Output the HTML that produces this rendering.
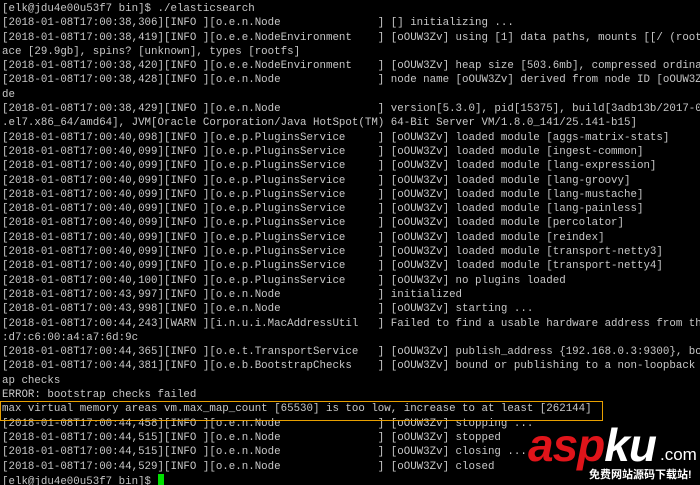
<!DOCTYPE html>
<html><head><meta charset="utf-8"><style>
html,body{margin:0;padding:0;background:#000;width:700px;height:485px;overflow:hidden;position:relative}
pre{margin:0;position:absolute;left:2px;top:2px;width:698px;height:483px;overflow:hidden;font-family:"Liberation Mono",monospace;font-size:10.8px;line-height:14.3px;color:#c8c8c8;white-space:pre}
.box{position:absolute;left:0;top:401px;width:603px;height:20px;border:1.5px solid #e8a000;box-sizing:border-box}
.cur{display:inline-block;width:6px;height:12px;background:#00e000;vertical-align:-2px}
.wm{position:absolute;left:528px;top:420px;font-family:"Liberation Sans",sans-serif;font-weight:bold;font-style:italic;font-size:46px;letter-spacing:-1px;line-height:50px}
.wm .a{color:#e0141a}.wm .k{color:#fff}
.com{position:absolute;left:660px;top:445px;font-family:"Liberation Sans",sans-serif;color:#fff;font-size:17px}
.cn{position:absolute;left:589px;top:466px;white-space:nowrap;font-family:"Liberation Sans","Noto Sans CJK SC",sans-serif;color:#fff;font-size:11px;font-weight:bold}
</style></head><body>
<pre>[elk@jdu4e00u53f7 bin]$ ./elasticsearch
[2018-01-08T17:00:38,306][INFO ][o.e.n.Node               ] [] initializing ...
[2018-01-08T17:00:38,419][INFO ][o.e.e.NodeEnvironment    ] [oOUW3Zv] using [1] data paths, mounts [[/ (rootfs)]], net usable_sp
ace [29.9gb], spins? [unknown], types [rootfs]
[2018-01-08T17:00:38,420][INFO ][o.e.e.NodeEnvironment    ] [oOUW3Zv] heap size [503.6mb], compressed ordinary object pointers
[2018-01-08T17:00:38,428][INFO ][o.e.n.Node               ] node name [oOUW3Zv] derived from node ID [oOUW3ZvSQ]; set [node.name]
de
[2018-01-08T17:00:38,429][INFO ][o.e.n.Node               ] version[5.3.0], pid[15375], build[3adb13b/2017-03-23T03:31:50.652Z]
.el7.x86_64/amd64], JVM[Oracle Corporation/Java HotSpot(TM) 64-Bit Server VM/1.8.0_141/25.141-b15]
[2018-01-08T17:00:40,098][INFO ][o.e.p.PluginsService     ] [oOUW3Zv] loaded module [aggs-matrix-stats]
[2018-01-08T17:00:40,099][INFO ][o.e.p.PluginsService     ] [oOUW3Zv] loaded module [ingest-common]
[2018-01-08T17:00:40,099][INFO ][o.e.p.PluginsService     ] [oOUW3Zv] loaded module [lang-expression]
[2018-01-08T17:00:40,099][INFO ][o.e.p.PluginsService     ] [oOUW3Zv] loaded module [lang-groovy]
[2018-01-08T17:00:40,099][INFO ][o.e.p.PluginsService     ] [oOUW3Zv] loaded module [lang-mustache]
[2018-01-08T17:00:40,099][INFO ][o.e.p.PluginsService     ] [oOUW3Zv] loaded module [lang-painless]
[2018-01-08T17:00:40,099][INFO ][o.e.p.PluginsService     ] [oOUW3Zv] loaded module [percolator]
[2018-01-08T17:00:40,099][INFO ][o.e.p.PluginsService     ] [oOUW3Zv] loaded module [reindex]
[2018-01-08T17:00:40,099][INFO ][o.e.p.PluginsService     ] [oOUW3Zv] loaded module [transport-netty3]
[2018-01-08T17:00:40,099][INFO ][o.e.p.PluginsService     ] [oOUW3Zv] loaded module [transport-netty4]
[2018-01-08T17:00:40,100][INFO ][o.e.p.PluginsService     ] [oOUW3Zv] no plugins loaded
[2018-01-08T17:00:43,997][INFO ][o.e.n.Node               ] initialized
[2018-01-08T17:00:43,998][INFO ][o.e.n.Node               ] [oOUW3Zv] starting ...
[2018-01-08T17:00:44,243][WARN ][i.n.u.i.MacAddressUtil   ] Failed to find a usable hardware address from the network interfa
:d7:c6:00:a4:a7:6d:9c
[2018-01-08T17:00:44,365][INFO ][o.e.t.TransportService   ] [oOUW3Zv] publish_address {192.168.0.3:9300}, bound_addresses {
[2018-01-08T17:00:44,381][INFO ][o.e.b.BootstrapChecks    ] [oOUW3Zv] bound or publishing to a non-loopback or non-link-local
ap checks
ERROR: bootstrap checks failed
max virtual memory areas vm.max_map_count [65530] is too low, increase to at least [262144]
[2018-01-08T17:00:44,458][INFO ][o.e.n.Node               ] [oOUW3Zv] stopping ...
[2018-01-08T17:00:44,515][INFO ][o.e.n.Node               ] [oOUW3Zv] stopped
[2018-01-08T17:00:44,515][INFO ][o.e.n.Node               ] [oOUW3Zv] closing ...
[2018-01-08T17:00:44,529][INFO ][o.e.n.Node               ] [oOUW3Zv] closed
[elk@jdu4e00u53f7 bin]$ <span class="cur"></span></pre>
<div class="box"></div>
<div class="wm"><span class="a">asp</span><span class="k">ku</span></div>
<div class="com">.com</div>
<div class="cn">免费网站源码下载站!</div>
</body></html>
